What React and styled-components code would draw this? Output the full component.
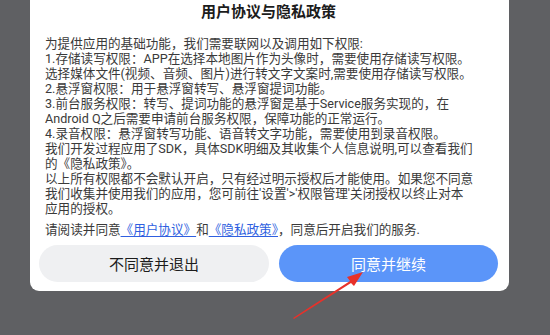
import styled, { createGlobalStyle } from "styled-components";

const GlobalStyle = createGlobalStyle`
  html, body {
    margin: 0;
    padding: 0;
    background: #5f6063;
  }
  body {
    font-family: Roboto, "Noto Sans CJK SC", sans-serif;
  }
`;

const Screen = styled.div`
  position: relative;
  width: 550px;
  height: 335px;
  overflow: hidden;
  background: #5f6063;
`;

const Card = styled.div`
  margin-left: 30px;
  width: 479px;
  box-sizing: border-box;
  background: #ffffff;
  border-radius: 0 0 9px 9px;
  padding: 0 11px 9px 9px;
`;

const Title = styled.h1`
  margin: 0;
  height: 24px;
  line-height: 24px;
  font-size: 15px;
  font-weight: 700;
  color: #1c1c1c;
  text-align: center;
`;

const Body = styled.div`
  margin-top: 12px;
  padding-left: 6px;
  font-size: 12.6px;
  line-height: 15px;
  color: #3a3a3a;
`;

const Line = styled.div`
  white-space: nowrap;
  margin-top: ${(p) => (p.$gap ? `${p.$gap}px` : "0")};
`;

const Link = styled.a`
  color: #2f5fe0;
  text-decoration: underline;
  text-underline-offset: 2px;
`;

const Buttons = styled.div`
  display: flex;
  gap: 10px;
  margin-top: 8px;
`;

const Button = styled.button`
  width: ${(p) => p.$w}px;
  height: 37px;
  border: none;
  border-radius: 19px;
  font-family: inherit;
  font-size: 15px;
  background: ${(p) => (p.$primary ? "#5b95f9" : "#eff0f2")};
  color: ${(p) => (p.$primary ? "#ffffff" : "#1c1c1c")};
  padding: 0;
`;

const Arrow = styled.svg`
  position: absolute;
  left: 0;
  top: 0;
  pointer-events: none;
`;

export default function App() {
  return (
    <Screen>
      <GlobalStyle />
      <Card>
        <Title>用户协议与隐私政策</Title>
        <Body>
          <Line>为提供应用的基础功能，我们需要联网以及调用如下权限:</Line>
          <Line>1.存储读写权限：APP在选择本地图片作为头像时，需要使用存储读写权限。</Line>
          <Line>选择媒体文件(视频、音频、图片)进行转文字文案时,需要使用存储读写权限。</Line>
          <Line>2.悬浮窗权限：用于悬浮窗转写、悬浮窗提词功能。</Line>
          <Line>3.前台服务权限：转写、提词功能的悬浮窗是基于Service服务实现的，在</Line>
          <Line>Android Q之后需要申请前台服务权限，保障功能的正常运行。</Line>
          <Line>4.录音权限：悬浮窗转写功能、语音转文字功能，需要使用到录音权限。</Line>
          <Line>我们开发过程应用了SDK，具体SDK明细及其收集个人信息说明,可以查看我们</Line>
          <Line>的《隐私政策》。</Line>
          <Line>以上所有权限都不会默认开启，只有经过明示授权后才能使用。如果您不同意</Line>
          <Line>我们收集并使用我们的应用，您可前往'设置'&gt;'权限管理'关闭授权以终止对本</Line>
          <Line>应用的授权。</Line>
          <Line $gap={6}>
            请阅读并同意<Link>《用户协议》</Link>和<Link>《隐私政策》</Link>，同意后开启我们的服务.
          </Line>
        </Body>
        <Buttons>
          <Button $w={230}>不同意并退出</Button>
          <Button $w={219} $primary>同意并继续</Button>
        </Buttons>
      </Card>
      <Arrow width="550" height="335" viewBox="0 0 550 335">
        <path d="M293 318 L350 281 L347 277 L363 272 L354 286 L351 283 L294 319 Z" fill="#e8312a" />
      </Arrow>
    </Screen>
  );
}
